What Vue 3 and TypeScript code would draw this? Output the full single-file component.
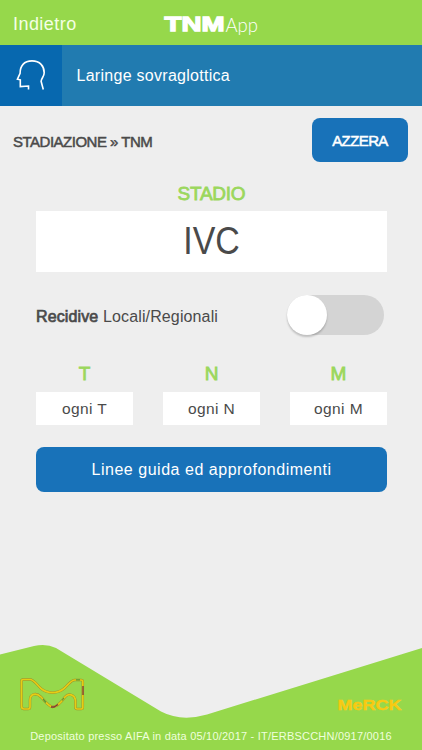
<script setup lang="ts">
import { ref } from 'vue'

interface Category {
  code: string
  value: string
}

const stage = ref<string>('IVC')
const recurrence = ref<boolean>(false)
const categories = ref<Category[]>([
  { code: 'T', value: 'ogni T' },
  { code: 'N', value: 'ogni N' },
  { code: 'M', value: 'ogni M' },
])
</script>

<template>
  <div class="screen">
    <header class="topbar">
      <a class="back">Indietro</a>
      <svg class="brand" width="100" height="30" viewBox="0 0 100 30">
        <text class="brand-bold" x="4.500" y="21.300" textLength="60" lengthAdjust="spacingAndGlyphs">TNM</text>
        <text class="brand-light" x="65.500" y="21.500" textLength="32.5" lengthAdjust="spacingAndGlyphs">App</text>
      </svg>
    </header>

    <div class="subject">
      <div class="subject-icon">
        <svg width="62" height="61" viewBox="0 0 62 61">
          <path d="M28.500 44.500V41L20.300 41.600V34.800L17.400 34.200L20.100 28.300C20 21 24 15.900 32 15.900C40 15.900 44.200 21.300 44.200 27.700C44.200 31.700 41.300 33.300 41.100 36.300L43.300 44.500" />
        </svg>
      </div>
      <h1 class="subject-title">Laringe sovraglottica</h1>
    </div>

    <div class="crumbs">
      <span class="crumb-text">STADIAZIONE » TNM</span>
      <button class="reset">AZZERA</button>
    </div>

    <main class="content">
      <h2 class="label stage-label">STADIO</h2>
      <div class="stage"><span class="stage-value">{{ stage }}</span></div>

      <div class="recurrence">
        <span class="recurrence-text"><span class="strong">Recidive</span> Locali/Regionali</span>
        <button class="toggle" :class="{ on: recurrence }" @click="recurrence = !recurrence">
          <span class="knob"></span>
        </button>
      </div>

      <div class="categories">
        <div v-for="c in categories" :key="c.code" class="category">
          <h2 class="label">{{ c.code }}</h2>
          <div class="value">{{ c.value }}</div>
        </div>
      </div>

      <button class="guide">Linee guida ed approfondimenti</button>
    </main>

    <footer class="footer">
      <svg class="footer-art" width="422" height="108" viewBox="0 0 422 108">
        <path class="wave" d="M0 12.500L34 4Q46 1 56 6L161 69.500Q181 80 207 72.500L422 6V108H0Z" />
        <g class="emblem">
          <path class="shade" d="M21.500 39Q21.500 37.500 23 37.500H30C34 37.500 37 43 41 46.500C48 52 57 52 64 46.500C69 42 71 38 75 38H81Q82.800 38 82.800 39.500V65.500Q82.800 67 81 67H77Q75.500 67 75.500 65.500V59C75 52 68 51 65 55C60 62 56 65 52.500 65C48 64 45 59 41 55C36 50 30 52 30 58V65Q30 67 28 67H24Q21.500 67 21.500 64Z" />
          <path d="M21.500 39Q21.500 37.500 23 37.500H30C34 37.500 37 43 41 46.500C48 52 57 52 64 46.500C69 42 71 38 75 38H81Q82.800 38 82.800 39.500V65.500Q82.800 67 81 67H77Q75.500 67 75.500 65.500V59C75 52 68 51 65 55C60 62 56 65 52.500 65C48 64 45 59 41 55C36 50 30 52 30 58V65Q30 67 28 67H24Q21.500 67 21.500 64Z" />
          <path class="violet" d="M83 44V53M51 65L54 65L58 62.500" />
          <path class="teal" d="M76 37.800H80M62 58.500L64 56M43 57L46 60.500" />
        </g>
        <text class="wordmark" x="337.500" y="67.500" textLength="64" lengthAdjust="spacingAndGlyphs">MeRCK</text>
      </svg>
      <p class="notice">Depositato presso AIFA in data 05/10/2017 - IT/ERBSCCHN/0917/0016</p>
    </footer>
  </div>
</template>

<style>
body {
  background: #eeeeee;
}
</style>

<style scoped>
.screen {
  display: flex;
  flex-direction: column;
  width: 422px;
  height: 750px;
  overflow: hidden;
  background: #eeeeee;
  color: #4a4a4a;
  font-family: "Liberation Sans", Arial, sans-serif;
}
h1, h2, p {
  margin: 0;
  font-weight: 400;
}
button {
  border: 0;
  padding: 0;
  font-family: inherit;
  color: #fff;
  background: #1872b9;
}
.topbar {
  display: grid;
  grid-template-columns: 160px 100px 1fr;
  height: 45px;
  background: #96d84b;
}
.back {
  padding: 2px 0 0 13px;
  line-height: 45px;
  font-size: 18px;
  letter-spacing: 0.45px;
  color: #f4ffe4;
}
.brand {
  margin-top: 10px;
}
.brand text {
  fill: #fff;
}
.brand .brand-bold {
  font-size: 21px;
  font-weight: 700;
  stroke: #fff;
  stroke-width: 1.3px;
}
.brand-light {
  font-family: Lato, sans-serif;
  font-size: 19px;
  font-weight: 300;
}
.subject {
  display: flex;
  height: 61px;
  background: #217bb0;
  color: #fff;
}
.subject-icon {
  width: 62px;
  background: #0768af;
}
.subject-icon svg {
  display: block;
}
.subject-icon path {
  fill: none;
  stroke: #fff;
  stroke-width: 1.6;
}
.subject-title {
  margin-left: 14.5px;
  line-height: 61px;
  font-size: 16px;
  letter-spacing: 0.28px;
}
.crumbs {
  display: flex;
  justify-content: space-between;
  align-items: flex-start;
  height: 77px;
  padding: 12px 14px 0 13px;
  box-sizing: border-box;
}
.crumb-text {
  padding-top: 15px;
  font-size: 15px;
  line-height: 18px;
  letter-spacing: -0.5px;
  -webkit-text-stroke: 0.5px currentColor;
}
.reset {
  width: 96px;
  height: 44px;
  border-radius: 8px;
  font-size: 15px;
  letter-spacing: -0.6px;
  -webkit-text-stroke: 0.5px currentColor;
}
.content {
  display: flex;
  flex-direction: column;
  flex: 1;
  padding: 0 35px 0 36px;
}
.label {
  font-size: 19px;
  line-height: 22px;
  text-align: center;
  color: #9bd75d;
  -webkit-text-stroke: 0.8px currentColor;
}
.stage-label {
  height: 28px;
  letter-spacing: -0.25px;
}
.stage {
  height: 61px;
  line-height: 60px;
  background: #fff;
  text-align: center;
  font-size: 39px;
}
.stage-value {
  display: inline-block;
  transform: scaleX(0.87);
}
.recurrence {
  display: flex;
  justify-content: space-between;
  height: 41px;
  margin-top: 23px;
  padding-right: 3px;
}
.recurrence-text {
  line-height: 43px;
  font-size: 16px;
  letter-spacing: 0.13px;
}
.strong {
  -webkit-text-stroke: 0.7px currentColor;
}
.toggle {
  display: flex;
  width: 97px;
  height: 40px;
  border-radius: 20px;
  background: #d4d4d4;
}
.toggle.on {
  justify-content: flex-end;
  background: #96d84b;
}
.knob {
  width: 40px;
  height: 40px;
  border-radius: 50%;
  background: #fff;
  box-shadow: 0 2px 2px rgba(0, 0, 0, 0.2);
}
.categories {
  display: grid;
  grid-template-columns: repeat(3, 97px);
  justify-content: space-between;
  margin-top: 27px;
}
.category .label {
  height: 29px;
}
.value {
  height: 33px;
  line-height: 33px;
  background: #fff;
  text-align: center;
  font-size: 15.5px;
  letter-spacing: 0.4px;
}
.guide {
  height: 45px;
  margin-top: 22px;
  border-radius: 8px;
  font-size: 16px;
  letter-spacing: 0.53px;
}
.footer {
  display: grid;
  height: 108px;
}
.footer-art,
.notice {
  grid-area: 1 / 1;
}
.wave {
  fill: #96d84b;
}
.emblem path {
  fill: none;
  stroke: #e6cd13;
  stroke-width: 1.7;
}
.emblem .shade {
  stroke: #9c8a2c;
  stroke-width: 2.5;
}
.emblem .violet {
  stroke: #77363d;
  stroke-width: 1.3;
}
.emblem .teal {
  stroke: #4b9c3c;
  stroke-width: 1.2;
}
.wordmark {
  font-family: "Liberation Sans", sans-serif;
  font-size: 14px;
  font-weight: 700;
  fill: #f8ca12;
  stroke: #f8ca12;
  stroke-width: 0.4px;
}
.notice {
  align-self: end;
  height: 22px;
  line-height: 16px;
  text-align: center;
  font-size: 11px;
  letter-spacing: 0.21px;
  color: #efffdd;
}
</style>
